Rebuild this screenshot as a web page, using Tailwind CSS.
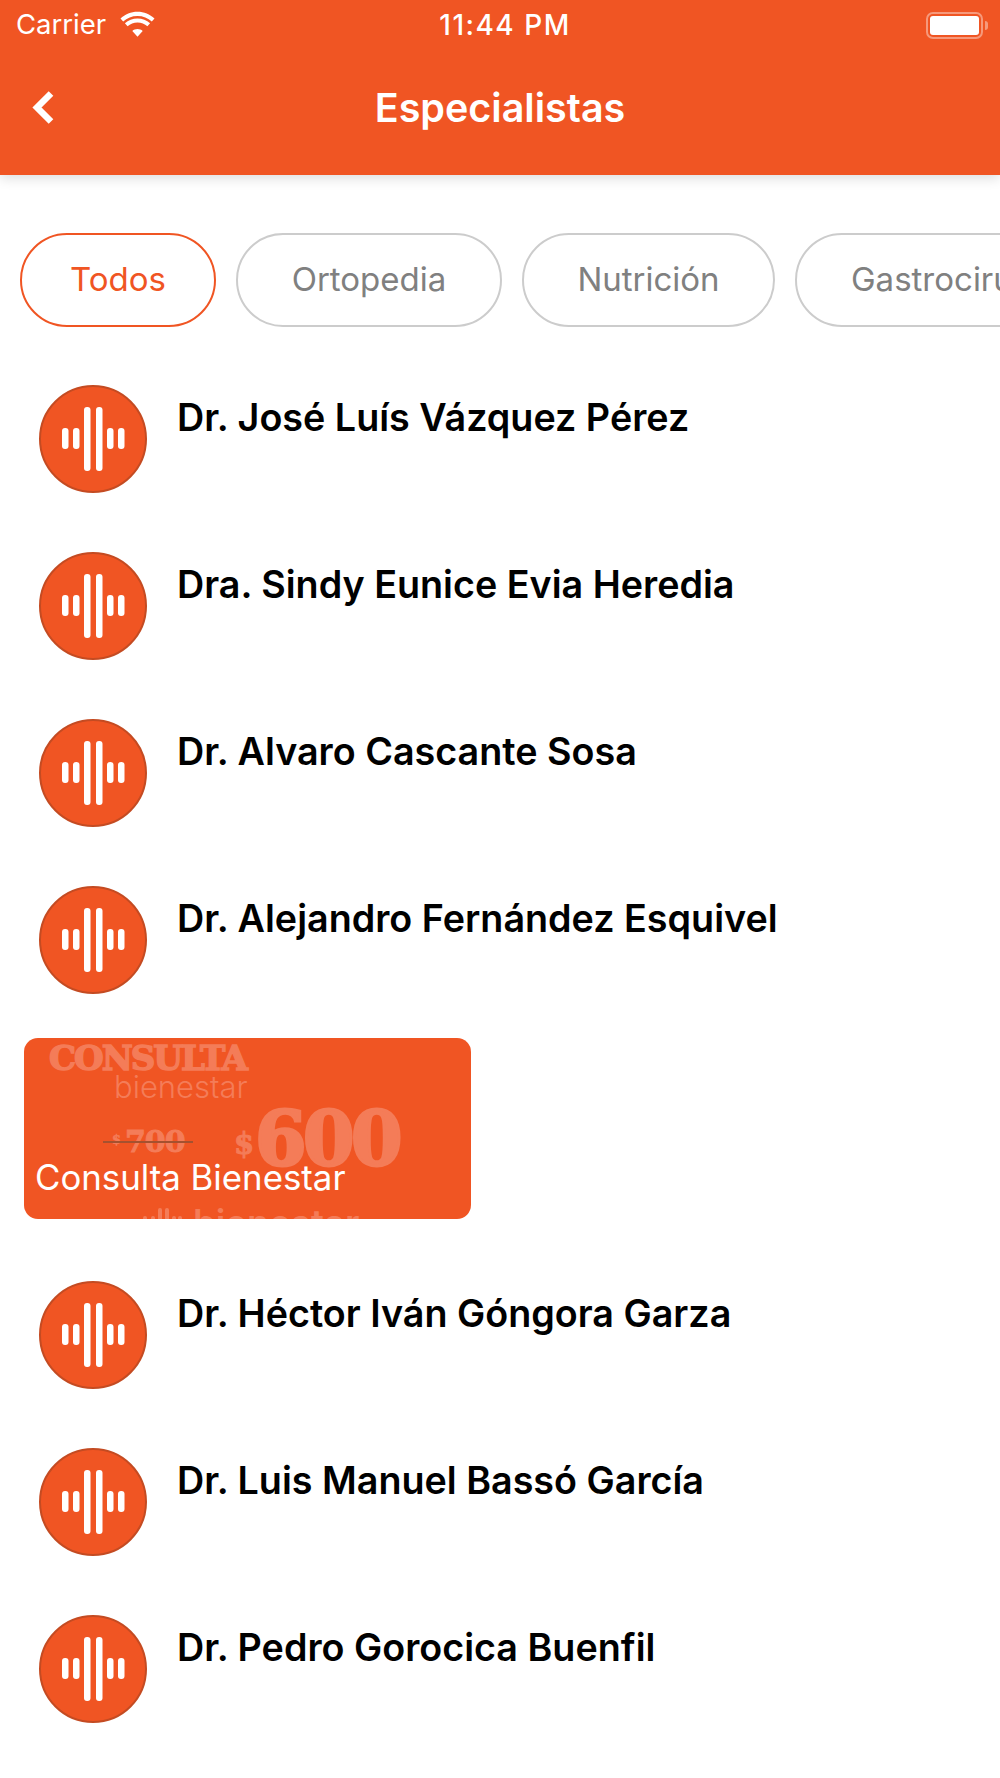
<!DOCTYPE html>
<html lang="es"><head><meta charset="utf-8"><script src="https://cdn.jsdelivr.net/npm/@tailwindcss/browser@4"></script></head>
<body class="bg-white">
<div class="w-[1000px] h-[1778px] overflow-hidden font-['Inter',sans-serif] bg-white">
  <header class="relative h-[175px] bg-[#f05523] text-white shadow-[0_3px_12px_rgba(0,0,0,0.14)]">
    <div class="flex items-center justify-between h-[50px] pl-[16px] pr-[12px]">
      <div class="flex items-center gap-[14px] w-[300px]">
        <span class="text-[27.500px] leading-none">Carrier</span>
        <svg class="w-[35px] h-[26px] -mt-[3px]" viewBox="0 0 35 26" fill="white"><path d="M17.5 5c5.500 0 10.500 2 14.300 5.500l2.700-3C29.900 3.200 24 .7 17.500.7S5.100 3.200.5 7.500l2.700 3C7 7 12 5 17.500 5z"/><path d="M17.500 11.500c3.800 0 7.200 1.400 9.900 3.700l2.700-3c-3.400-3-7.800-4.800-12.600-4.800S8.300 9.200 4.900 12.200l2.700 3c2.700-2.300 6.100-3.700 9.900-3.700z"/><path d="M17.500 18c-2 0-3.800.7-5.200 1.900l5.200 5.800 5.200-5.800c-1.400-1.200-3.200-1.900-5.200-1.900z"/></svg>
      </div>
      <span class="ml-[6px] text-[28px] leading-none font-medium tracking-[1.500px]">11:44 PM</span>
      <div class="flex justify-end items-center w-[300px]">
        <div class="w-[57px] h-[27px] rounded-[7px] border-2 border-white/40 p-[2px]"><div class="w-full h-full rounded-[3px] bg-white"></div></div>
        <div class="w-[3px] h-[9px] rounded-r-full bg-white/40 ml-[2px]"></div>
      </div>
    </div>
    <div class="relative flex items-center justify-center h-[60px] mt-[29px]">
      <svg class="absolute left-[32px] top-[12px] w-[22px] h-[33px]" viewBox="0 0 22 33" fill="none" stroke="white" stroke-width="6.500"><path d="M19 2.500 5 16.500l14 14"/></svg>
      <h1 class="text-[39.500px] leading-none font-semibold">Especialistas</h1>
    </div>
  </header>

  <nav class="flex gap-[20px] pl-[20px] pt-[58px] overflow-hidden whitespace-nowrap text-[33px] leading-none">
    <div class="flex shrink-0 items-center justify-center w-[196px] h-[94px] rounded-full border-2 border-[#f05523] text-[#f05523] pb-[2px]">Todos</div>
    <div class="flex shrink-0 items-center justify-center w-[266px] h-[94px] rounded-full border-2 border-[#cccccc] text-[#808080] pb-[2px]">Ortopedia</div>
    <div class="flex shrink-0 items-center justify-center w-[253px] h-[94px] rounded-full border-2 border-[#cccccc] text-[#808080] pb-[2px]">Nutrición</div>
    <div class="flex shrink-0 items-center pl-[54px] w-[400px] h-[94px] rounded-full border-2 border-[#cccccc] text-[#808080] pb-[2px]">Gastrocirugía</div>
  </nav>

  <main class="pt-[58px]">
    <article class="flex h-[167px] pl-[39px] gap-[30px]">
      <svg class="w-[108px] h-[108px] shrink-0" viewBox="0 0 108 108"><circle cx="54" cy="54" r="53" fill="#f05523" stroke="#c44b22" stroke-width="2"/><g fill="white"><rect x="23" y="43" width="6.500" height="21" rx="3"/><rect x="34" y="43" width="6.500" height="21" rx="3"/><rect x="45" y="22" width="6.500" height="64" rx="3"/><rect x="57" y="22" width="6.500" height="64" rx="3"/><rect x="68" y="43" width="6.500" height="21" rx="3"/><rect x="79" y="43" width="6.500" height="21" rx="3"/></g></svg>
      <h2 class="pt-[11px] text-[37.700px] leading-[42px] font-semibold text-black">Dr. José Luís Vázquez Pérez</h2>
    </article>
    <article class="flex h-[167px] pl-[39px] gap-[30px]">
      <svg class="w-[108px] h-[108px] shrink-0" viewBox="0 0 108 108"><circle cx="54" cy="54" r="53" fill="#f05523" stroke="#c44b22" stroke-width="2"/><g fill="white"><rect x="23" y="43" width="6.500" height="21" rx="3"/><rect x="34" y="43" width="6.500" height="21" rx="3"/><rect x="45" y="22" width="6.500" height="64" rx="3"/><rect x="57" y="22" width="6.500" height="64" rx="3"/><rect x="68" y="43" width="6.500" height="21" rx="3"/><rect x="79" y="43" width="6.500" height="21" rx="3"/></g></svg>
      <h2 class="pt-[11px] text-[37.700px] leading-[42px] font-semibold text-black">Dra. Sindy Eunice Evia Heredia</h2>
    </article>
    <article class="flex h-[167px] pl-[39px] gap-[30px]">
      <svg class="w-[108px] h-[108px] shrink-0" viewBox="0 0 108 108"><circle cx="54" cy="54" r="53" fill="#f05523" stroke="#c44b22" stroke-width="2"/><g fill="white"><rect x="23" y="43" width="6.500" height="21" rx="3"/><rect x="34" y="43" width="6.500" height="21" rx="3"/><rect x="45" y="22" width="6.500" height="64" rx="3"/><rect x="57" y="22" width="6.500" height="64" rx="3"/><rect x="68" y="43" width="6.500" height="21" rx="3"/><rect x="79" y="43" width="6.500" height="21" rx="3"/></g></svg>
      <h2 class="pt-[11px] text-[37.700px] leading-[42px] font-semibold text-black">Dr. Alvaro Cascante Sosa</h2>
    </article>
    <article class="flex h-[152px] pl-[39px] gap-[30px]">
      <svg class="w-[108px] h-[108px] shrink-0" viewBox="0 0 108 108"><circle cx="54" cy="54" r="53" fill="#f05523" stroke="#c44b22" stroke-width="2"/><g fill="white"><rect x="23" y="43" width="6.500" height="21" rx="3"/><rect x="34" y="43" width="6.500" height="21" rx="3"/><rect x="45" y="22" width="6.500" height="64" rx="3"/><rect x="57" y="22" width="6.500" height="64" rx="3"/><rect x="68" y="43" width="6.500" height="21" rx="3"/><rect x="79" y="43" width="6.500" height="21" rx="3"/></g></svg>
      <h2 class="pt-[11px] text-[37.700px] leading-[42px] font-semibold text-black">Dr. Alejandro Fernández Esquivel</h2>
    </article>

    <section class="relative ml-[24px] mb-[62px] w-[447px] h-[181px] overflow-hidden rounded-[14px] bg-[#f05523]">
      <div class="absolute left-[25px] top-[0px] text-[34px] leading-[40px] font-bold font-['DejaVu_Serif',serif] text-[#f47c58] [-webkit-text-stroke:1.500px_#f47c58] tracking-[-2px]">CONSULTA</div>
      <div class="absolute left-[90px] top-[31px] text-[31px] leading-[36px] font-light text-[#f47c58]">bienestar</div>
      <div class="absolute left-[88px] top-[92px] text-[13px] leading-[20px] font-bold font-['DejaVu_Serif',serif] text-[#f47c58] [-webkit-text-stroke:0.500px_#f47c58]">$</div>
      <div class="absolute left-[101px] top-[86px] text-[30px] leading-[36px] font-bold font-['DejaVu_Serif',serif] text-[#f47c58] [-webkit-text-stroke:1px_#f47c58] tracking-[-1px]">700</div>
      <div class="absolute left-[79px] top-[103px] w-[90px] h-[2px] bg-[#a5512f]"></div>
      <div class="absolute left-[210px] top-[84px] text-[29px] leading-[44px] font-bold font-['DejaVu_Serif',serif] text-[#f47c58] [-webkit-text-stroke:1px_#f47c58]">$</div>
      <div class="absolute left-[231px] top-[61px] text-[74px] leading-[80px] font-bold font-['DejaVu_Serif',serif] text-[#f47c58] [-webkit-text-stroke:3px_#f47c58] tracking-[-3.500px]">600</div>
      <svg class="absolute left-[118px] top-[167px] w-[40px] h-[20px]" viewBox="0 0 40 20" fill="#f47c58"><rect x="1" y="11" width="4" height="9" rx="2"/><rect x="9" y="11" width="4" height="9" rx="2"/><rect x="16" y="3" width="4" height="17" rx="2"/><rect x="23" y="3" width="4" height="17" rx="2"/><rect x="30" y="11" width="4" height="9" rx="2"/><rect x="36" y="11" width="4" height="9" rx="2"/></svg>
      <div class="absolute left-[169px] top-[163px] text-[36.500px] leading-[44px] font-semibold text-[#f47c58]">bienestar</div>
      <div class="absolute left-[11px] top-[119px] text-[34.800px] leading-[40px] text-white">Consulta Bienestar</div>
    </section>

    <article class="flex h-[167px] pl-[39px] gap-[30px]">
      <svg class="w-[108px] h-[108px] shrink-0" viewBox="0 0 108 108"><circle cx="54" cy="54" r="53" fill="#f05523" stroke="#c44b22" stroke-width="2"/><g fill="white"><rect x="23" y="43" width="6.500" height="21" rx="3"/><rect x="34" y="43" width="6.500" height="21" rx="3"/><rect x="45" y="22" width="6.500" height="64" rx="3"/><rect x="57" y="22" width="6.500" height="64" rx="3"/><rect x="68" y="43" width="6.500" height="21" rx="3"/><rect x="79" y="43" width="6.500" height="21" rx="3"/></g></svg>
      <h2 class="pt-[11px] text-[37.700px] leading-[42px] font-semibold text-black">Dr. Héctor Iván Góngora Garza</h2>
    </article>
    <article class="flex h-[167px] pl-[39px] gap-[30px]">
      <svg class="w-[108px] h-[108px] shrink-0" viewBox="0 0 108 108"><circle cx="54" cy="54" r="53" fill="#f05523" stroke="#c44b22" stroke-width="2"/><g fill="white"><rect x="23" y="43" width="6.500" height="21" rx="3"/><rect x="34" y="43" width="6.500" height="21" rx="3"/><rect x="45" y="22" width="6.500" height="64" rx="3"/><rect x="57" y="22" width="6.500" height="64" rx="3"/><rect x="68" y="43" width="6.500" height="21" rx="3"/><rect x="79" y="43" width="6.500" height="21" rx="3"/></g></svg>
      <h2 class="pt-[11px] text-[37.700px] leading-[42px] font-semibold text-black">Dr. Luis Manuel Bassó García</h2>
    </article>
    <article class="flex h-[167px] pl-[39px] gap-[30px]">
      <svg class="w-[108px] h-[108px] shrink-0" viewBox="0 0 108 108"><circle cx="54" cy="54" r="53" fill="#f05523" stroke="#c44b22" stroke-width="2"/><g fill="white"><rect x="23" y="43" width="6.500" height="21" rx="3"/><rect x="34" y="43" width="6.500" height="21" rx="3"/><rect x="45" y="22" width="6.500" height="64" rx="3"/><rect x="57" y="22" width="6.500" height="64" rx="3"/><rect x="68" y="43" width="6.500" height="21" rx="3"/><rect x="79" y="43" width="6.500" height="21" rx="3"/></g></svg>
      <h2 class="pt-[11px] text-[37.700px] leading-[42px] font-semibold text-black">Dr. Pedro Gorocica Buenfil</h2>
    </article>
  </main>
</div>
</body></html>
